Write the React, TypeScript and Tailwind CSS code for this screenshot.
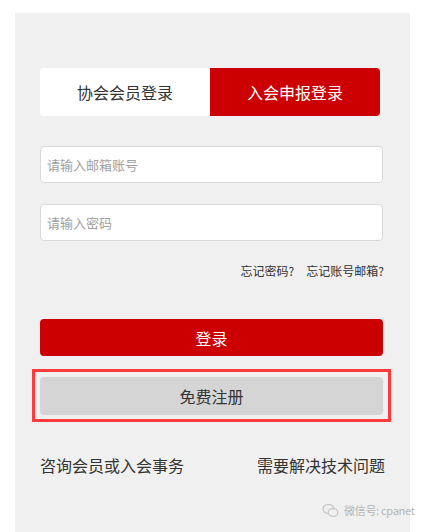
import React from "react";

export default function App() {
  const font = { fontFamily: '"Noto Sans CJK SC", "Noto Sans", sans-serif' };
  return (
    <div className="relative w-[427px] h-[532px] bg-white overflow-hidden" style={font}>
      <div className="ml-[15px] mt-[13px] w-[395px] h-[519px] bg-[#f0f0f0] pl-[25px] pr-[27px] pt-[55px] flex flex-col">
        <div className="flex w-[340px] h-[48px] rounded-[4px] overflow-hidden">
          <div className="flex-1 bg-white flex items-center justify-center text-[16px] text-[#333]">协会会员登录</div>
          <div className="flex-1 bg-[#cc0000] flex items-center justify-center text-[16px] text-white">入会申报登录</div>
        </div>
        <div className="mt-[30px] h-[37px] bg-white border border-[#d9d9d9] rounded-[4px] flex items-center pl-[6px] text-[13px] text-[#a0a0a0]">请输入邮箱账号</div>
        <div className="mt-[21px] h-[37px] bg-white border border-[#d9d9d9] rounded-[4px] flex items-center pl-[6px] text-[13px] text-[#a0a0a0]">请输入密码</div>
        <div className="mt-[21px] -mr-[1px] flex justify-end gap-[12px] text-[12px] text-[#333] leading-[17px]">
          <span>忘记密码?</span>
          <span>忘记账号邮箱?</span>
        </div>
        <div className="mt-[40px] h-[37px] bg-[#cc0000] rounded-[4px] flex items-center justify-center text-[16px] text-white">登录</div>
        <div className="mt-[13px] -ml-[8px] -mr-[8px] border-[3px] border-[#ff3b3b] px-[5px] pt-[5px] pb-[4px]">
          <div className="h-[38px] bg-[#d5d5d5] rounded-[4px] flex items-center justify-center text-[16px] text-[#333]">免费注册</div>
        </div>
        <div className="mt-[32px] -mr-[2px] flex justify-between text-[16px] text-[#333] leading-[22px]">
          <span>咨询会员或入会事务</span>
          <span>需要解决技术问题</span>
        </div>
      </div>
      <div className="absolute left-[322px] top-[502px] flex items-center gap-[5px] text-[11px] text-[#b5b5b5] tracking-[-0.3px]">
        <svg width="17" height="15" viewBox="0 0 17 15" fill="none" stroke="#c4c4c4" strokeWidth="1.2">
          <ellipse cx="6.5" cy="6" rx="5.5" ry="4.5" />
          <ellipse cx="11" cy="9.5" rx="4.8" ry="3.8" fill="#f0f0f0" />
        </svg>
        <span>微信号: cpanet</span>
      </div>
    </div>
  );
}
